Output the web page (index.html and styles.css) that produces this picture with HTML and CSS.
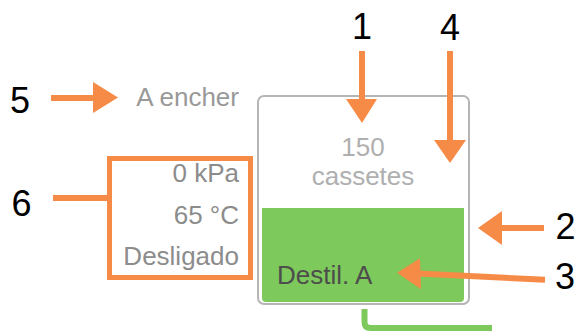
FILE: index.html
```html
<!DOCTYPE html>
<html lang="pt">
<head>
    <meta charset="UTF-8">
    <meta name="viewport" content="width=device-width, initial-scale=1.0">
    <title>Retorta</title>
    <link rel="stylesheet" href="styles.css">
</head>
<body>
    <div class="figure">
        <div class="diagram">
            <div class="status">
                <div class="status-label">A encher</div>
                <div class="readings">
                    <div>0 kPa</div>
                    <div>65 °C</div>
                    <div>Desligado</div>
                </div>
            </div>
            <div class="retort">
                <div class="count">
                    <div>150</div>
                    <div>cassetes</div>
                </div>
                <div class="station">Destil. A</div>
            </div>
        </div>

        <svg class="arrows" width="579" height="331" viewBox="0 0 579 331">
            <g stroke="#f68a47" stroke-width="6" fill="none">
                <line x1="51" y1="98" x2="96" y2="98" />
                <line x1="362" y1="51" x2="362" y2="102" />
                <line x1="450" y1="51" x2="450" y2="142" />
                <line x1="500" y1="228" x2="544" y2="228" />
                <line x1="418" y1="273.6" x2="545" y2="279.7" />
                <line x1="53" y1="198" x2="108" y2="198" />
            </g>
            <g fill="#f68a47">
                <polygon points="93,82 118,97.5 93,113" />
                <polygon points="346,99 377,99 362,123" />
                <polygon points="434,140 466,140 450,163" />
                <polygon points="502,211 478,228 502,245" />
                <polygon points="397,272.7 420,258.3 421,289.3" />
            </g>
            <path d="M364.5 309 V322 Q364.5 328 370.5 328 H492" stroke="#7dc95b" stroke-width="6" fill="none" />
        </svg>

        <span class="callout n1">1</span>
        <span class="callout n2">2</span>
        <span class="callout n3">3</span>
        <span class="callout n4">4</span>
        <span class="callout n5">5</span>
        <span class="callout n6">6</span>
    </div>
</body>
</html>
```

FILE: styles.css
```css
body {
    margin: 0;
    background-color: #fff;
    font-family: 'Liberation Sans', Arial, sans-serif;
}
.figure {
    position: relative;
    width: 579px;
    height: 331px;
    overflow: hidden;
}
.diagram {
    display: flex;
    align-items: flex-start;
    gap: 4px;
    padding: 82px 0 0 107px;
}
.status {
    width: 146px;
    display: flex;
    flex-direction: column;
    align-items: flex-end;
    font-size: 26px;
}
.status-label {
    line-height: 30px;
    color: #999;
    padding-right: 14px;
    margin-bottom: 44px;
}
.readings {
    box-sizing: border-box;
    width: 146px;
    border: 5px solid #f68a47;
    padding: 0 9px 7px 0;
    display: flex;
    flex-direction: column;
    gap: 17.5px;
    line-height: 24px;
    text-align: right;
    color: #8c8c8c;
}
.retort {
    box-sizing: border-box;
    width: 213px;
    height: 210px;
    margin-top: 13px;
    border: 2px solid #b5b5b5;
    border-radius: 7px;
    padding: 0 4px 1px 3px;
    display: flex;
    flex-direction: column;
    font-size: 26px;
}
.count {
    box-sizing: border-box;
    height: 111px;
    padding-top: 35.5px;
    line-height: 29px;
    text-align: center;
    color: #afafaf;
}
.station {
    flex: 1;
    display: flex;
    align-items: flex-end;
    padding: 0 0 12.5px 15px;
    line-height: 29px;
    background-color: #7dc95b;
    border-radius: 0 0 4px 4px;
    color: #4d4d4d;
}
.arrows {
    position: absolute;
    left: 0;
    top: 0;
    pointer-events: none;
}
.callout {
    position: absolute;
    font-size: 36px;
    line-height: 36px;
    color: #000;
}
.n1 { left: 352px; top: 9px; }
.n4 { left: 440px; top: 9.5px; }
.n5 { left: 10px; top: 82.5px; }
.n6 { left: 11.5px; top: 185.5px; }
.n2 { left: 555.5px; top: 208.5px; }
.n3 { left: 555px; top: 258.5px; }
```
